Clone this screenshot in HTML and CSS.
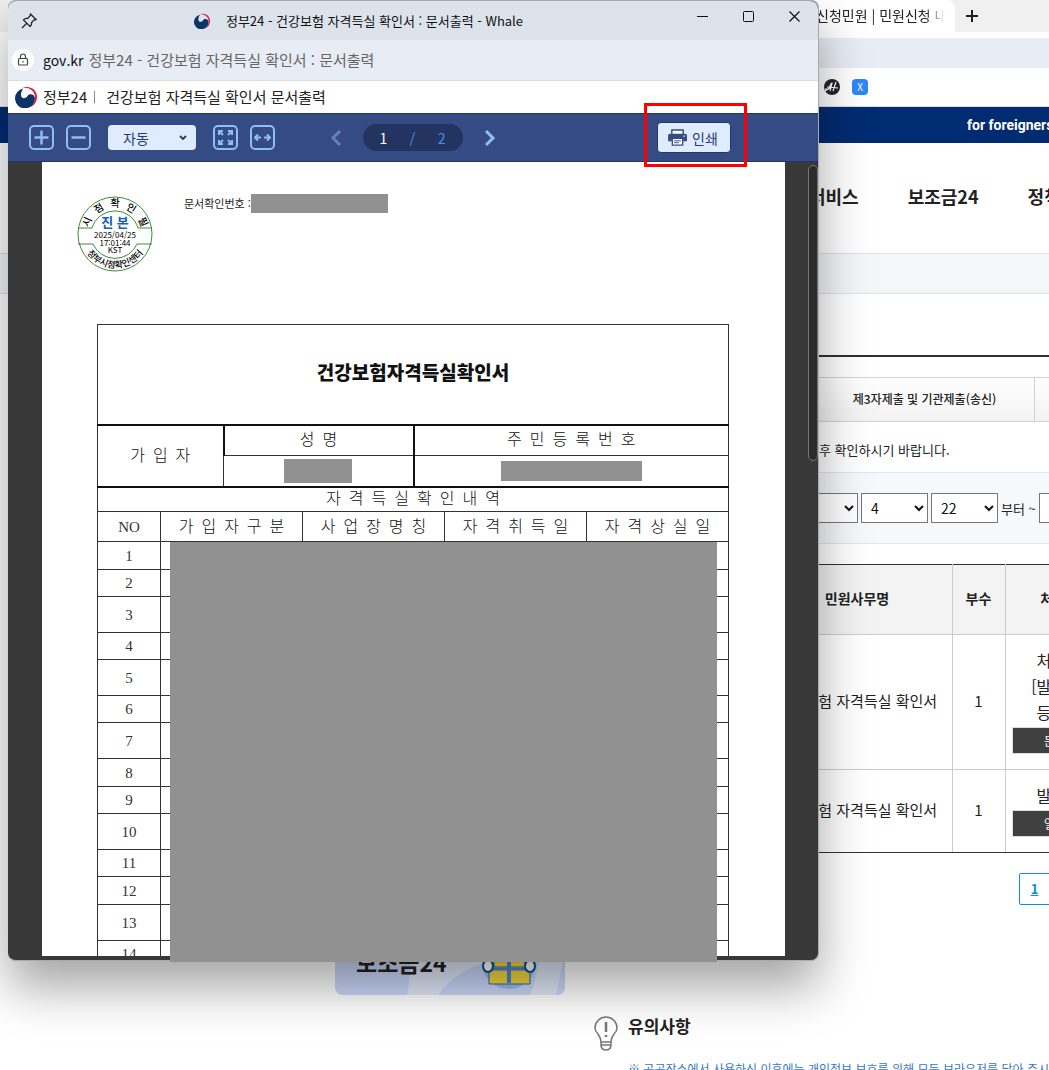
FILE: index.html
```html
<!DOCTYPE html>
<html lang="ko">
<head>
  <meta charset="UTF-8" />
  <meta name="viewport" content="width=device-width, initial-scale=1.0"/>
  <title>정부24 - 건강보험 자격득실 확인서 : 문서출력</title>
  <link rel="stylesheet" href="styles.css">
</head>
<body>
  <!-- main browser window -->
  <div class="browser">
    <div class="tab-strip">
      <div class="tab"><span>신청민원 | 민원신청 내역</span></div>
      <button class="new-tab" aria-label="새 탭">
        <svg width="14" height="14" viewBox="0 0 14 14"><path d="M7 1v12M1 7h12" stroke="#222" stroke-width="2"/></svg>
      </button>
    </div>
    <div class="address-row"></div>
    <div class="bookmarks">
      <svg width="16" height="16" viewBox="0 0 16 16"><circle cx="8" cy="8" r="8" fill="#25252f"/><path d="M1 10q4 1 5-3 1-3 2-3L6 12M12 3 9 12M3 8l11 1M1 12q3-2 5-3" fill="none" stroke="#fff" stroke-width="1.2"/></svg>
      <span class="bookmark-x">X</span>
    </div>

    <div class="gov-bar"><a href="#">for foreigners</a></div>
    <nav class="main-nav">
      <a href="#">서비스</a>
      <a href="#">보조금24</a>
      <a href="#">정책정보</a>
    </nav>
    <div class="breadcrumb"></div>

    <div class="content">
      <aside class="sidebar">
        <a class="side-card" href="#">
          <svg class="card-bg" viewBox="0 0 230 100" preserveAspectRatio="none"><path d="M0 0h60q22 60 12 100H0zM103 100q25-35 72-34h29q-3 20-9 34zM230 50v50h-9q6-25 9-50z" fill="#cbd9fa"/></svg>
          <span>보조금24</span>
          <svg class="gift" width="56" height="56" viewBox="0 0 56 56">
            <circle cx="28" cy="28" r="27" fill="#9dbcf0"/>
            <path d="M8 30h41v20H8z" fill="#f4d83e" stroke="#2c66b5"/>
            <path d="M13 18h31v15H13z" fill="#f4d83e" stroke="#2c66b5"/>
            <path d="M9 35h40" stroke="#4c87d8" stroke-width="3"/>
            <path d="M28 12v37" stroke="#4c87d8" stroke-width="4"/>
            <ellipse cx="7" cy="32" rx="5" ry="6" fill="#fff" stroke="#08539b" stroke-width="2"/>
            <ellipse cx="49" cy="32" rx="5" ry="6" fill="#fff" stroke="#08539b" stroke-width="2"/>
          </svg>
        </a>
      </aside>

      <main class="main">
        <div class="title-line"></div>
        <div class="page-tabs">
          <a href="#">온라인신청민원</a>
          <a href="#">제3자제출 및 기관제출(송신)</a>
          <a href="#">기관제출(수신)</a>
          <a href="#">방문신청민원</a>
        </div>
        <p class="guide">후 확인하시기 바랍니다.</p>
        <form class="filter">
          <select class="year" aria-label="시작 연도"><option>2025</option></select>
          <select aria-label="시작 월"><option>4</option></select>
          <select aria-label="시작 일"><option>22</option></select>
          <span>부터 ~</span>
          <select class="year" aria-label="종료 연도"><option>2025</option></select>
        </form>
        <table class="list">
          <colgroup><col class="c-date"><col class="c-name"><col class="c-count"><col class="c-state"><col></colgroup>
          <thead>
            <tr><th>신청일</th><th>민원사무명</th><th>부수</th><th>처리상태</th><th>비고</th></tr>
          </thead>
          <tbody>
            <tr class="tall">
              <td></td><td>건강보험 자격득실 확인서</td><td>1</td>
              <td class="state">처리완료<br>[발급완료]<br>등록문서<button>문서출력</button></td><td></td>
            </tr>
            <tr>
              <td></td><td>건강보험 자격득실 확인서</td><td>1</td>
              <td class="state">발급완료<button>열람문서</button></td><td></td>
            </tr>
          </tbody>
        </table>
        <div class="paging"><a href="#">1</a></div>
        <section class="notice">
          <svg width="24" height="35" viewBox="0 0 24 35" fill="none" stroke="#777" stroke-width="1.5">
            <path d="M7 26q0-4-3-8Q1 15 1 12a11 11 0 0 1 22 0q0 3-3 6-3 4-3 8zM7 26v4q1 4 5 4t5-4v-4M7 29h10"/>
            <path d="M12 6v10" stroke-width="2.5"/><path d="M12 19v2" stroke-width="2.5"/>
          </svg>
          <div>
            <h3>유의사항</h3>
            <p>※ 공공장소에서 사용하신 이후에는 개인정보 보호를 위해 모든 브라우저를 닫아 주시기 바랍니다.</p>
          </div>
        </section>
      </main>
    </div>
  </div>

  <!-- shared symbols -->
  <svg class="defs" width="0" height="0" aria-hidden="true">
    <symbol id="gov" viewBox="0 0 22 22">
      <path d="M7 2C13-1 22 2 22 11c0 5-3 9-7 10 4-3 5.800-7 5-11C19 4.500 14 1 7 2z" fill="#e4173e"/>
      <path d="M8.500 2.500A10 10 0 1 0 20 12.500C20 8 14 7 12.500 10c-1.500 3-6.500 3-6.500-1 0-3 1-5 2.500-6.500z" fill="#0a3566"/>
    </symbol>
  </svg>

  <!-- document popup -->
  <div class="popup">
    <div class="titlebar">
      <svg class="pin" width="16" height="16" viewBox="0 0 16 16" fill="none" stroke="#222" stroke-width="1.300"><path d="M9.500 1 15 6.500 13 7 10.500 9.500Q11 12 9 13.500L2.500 7Q4 5 6.500 5.500L9 3zM5.500 10.500 1 15"/></svg>
      <div class="window-title">
        <svg width="16" height="16"><use href="#gov"/></svg>
        <span>정부24 - 건강보험 자격득실 확인서 : 문서출력 - Whale</span>
      </div>
      <div class="window-buttons">
        <button aria-label="최소화"><svg width="11" height="11"><path d="M0 5.500h11" stroke="#111"/></svg></button>
        <button aria-label="최대화"><svg width="11" height="11"><rect x=".5" y=".5" width="10" height="10" rx="1" fill="none" stroke="#111"/></svg></button>
        <button aria-label="닫기"><svg width="11" height="11"><path d="m.5.5 10 10m0-10-10 10" stroke="#111" stroke-width="1.200"/></svg></button>
      </div>
    </div>
    <div class="urlbar">
      <span class="lock"><svg width="12" height="14" viewBox="0 0 12 14" fill="none" stroke="#444" stroke-width="1.200"><rect x="1.500" y="5.500" width="9" height="6.500" rx="1"/><path d="M3.500 5.500V3.500a2.500 2.500 0 0 1 5 0v2M6 8v1.500"/></svg></span>
      <span class="host">gov.kr</span>
      <span class="url-title">정부24 - 건강보험 자격득실 확인서 : 문서출력</span>
    </div>
    <div class="doc-title">
      <svg width="22" height="22"><use href="#gov"/></svg>
      <span>정부24</span>
      <i class="divider"></i>
      <span>건강보험 자격득실 확인서 문서출력</span>
    </div>
    <div class="toolbar">
      <div class="tools">
        <button class="tool" aria-label="확대"><svg width="17" height="17" viewBox="0 0 17 17"><path d="M8.500 1.500v14M1.500 8.500h14"/></svg></button>
        <button class="tool" aria-label="축소"><svg width="17" height="17" viewBox="0 0 17 17"><path d="M1.500 8.500h14"/></svg></button>
        <div class="zoom-box">
          <select class="zoom" aria-label="배율"><option>자동</option></select>
          <svg width="8" height="6" viewBox="0 0 8 6"><path d="m1 1 3 3 3-3" fill="none" stroke="#24396e" stroke-width="1.800"/></svg>
        </div>
        <button class="tool thin" aria-label="쪽 맞춤"><svg width="17" height="17" viewBox="0 0 17 17"><path d="m2 2 4 4m5 5 4 4M15 2l-4 4m-5 5-4 4M2 6V2h4m5 0h4v4m0 5v4h-4m-5 0H2v-4"/></svg></button>
        <button class="tool thin" aria-label="폭 맞춤"><svg width="17" height="17" viewBox="0 0 17 17"><path d="M1 8.500h6m3 0h6M4 5.500 1 8.500l3 3m9-6 3 3-3 3"/></svg></button>
      </div>
      <div class="pager">
        <button class="arrow dim" aria-label="이전"><svg width="12" height="18" viewBox="0 0 12 18"><path d="M10 2 3 9l7 7"/></svg></button>
        <div class="pages"><span class="current">1</span><span>/</span><span>2</span></div>
        <button class="arrow" aria-label="다음"><svg width="12" height="18" viewBox="0 0 12 18"><path d="m2 2 7 7-7 7"/></svg></button>
      </div>
      <button class="print">
        <svg width="19" height="17" viewBox="0 0 20 18"><path d="M4 6V1h12v5" fill="#fff" stroke="#344b84" stroke-width="1.500"/><path d="M2 5h16q2 0 2 2v6h-4v-3H4v3H0V7q0-2 2-2z" fill="#344b84"/><path d="M4.500 10h11v7h-11z" fill="#fff" stroke="#344b84" stroke-width="1.400"/><path d="M6.500 12.500h7m-7 2h5" stroke="#344b84"/><path d="M16 7.500h2" stroke="#fff"/></svg>
        인쇄
      </button>
    </div>

    <div class="viewer">
      <div class="paper">
        <div class="paper-head">
          <svg class="stamp" width="76" height="76" viewBox="0 0 76 76">
            <defs>
              <path id="arcTop" d="M11 38a27 27 0 0 1 54 0"/>
              <path id="arcBottom" d="M4 38a34 34 0 0 0 68 0"/>
            </defs>
            <g fill="none" stroke="#3f8a3f">
              <circle cx="38" cy="38" r="37"/>
              <path d="M1 32h14a24 24 0 0 1 46 0h14M1 48h15a24 24 0 0 0 44 0h15"/>
            </g>
            <g class="ring" text-anchor="middle">
              <text><textPath href="#arcTop" startOffset="13%">시</textPath></text>
              <text><textPath href="#arcTop" startOffset="32%">점</textPath></text>
              <text><textPath href="#arcTop" startOffset="50%">확</textPath></text>
              <text><textPath href="#arcTop" startOffset="68%">인</textPath></text>
              <text><textPath href="#arcTop" startOffset="87%">필</textPath></text>
              <text><textPath href="#arcBottom" startOffset="50%">정부시점확인센터</textPath></text>
            </g>
            <text class="origin" x="38" y="31">진 본</text>
            <text class="stamp-time" x="38" y="42">2025/04/25</text>
            <text class="stamp-time" x="38" y="50">17:01:44</text>
            <text class="stamp-time" x="38" y="57">KST</text>
          </svg>
          <div class="doc-no">문서확인번호 : <span class="mask mask-no"></span></div>
        </div>

        <table class="cert">
          <colgroup><col class="w63"><col class="w63"><col class="w79"><col class="w111"><col class="w31"><col class="w142"><col class="w142"></colgroup>
          <tr class="cert-title"><th colspan="7">건강보험자격득실확인서</th></tr>
          <tr class="r31"><td colspan="2" rowspan="2">가&nbsp; 입&nbsp; 자</td><td colspan="2">성&nbsp; 명</td><td colspan="3">주&nbsp; 민&nbsp; 등&nbsp; 록&nbsp; 번&nbsp; 호</td></tr>
          <tr class="r31 thick"><td colspan="2"><span class="mask mask-name"></span></td><td colspan="3"><span class="mask mask-id"></span></td></tr>
          <tr class="r25"><td colspan="7">자&nbsp; 격&nbsp; 득&nbsp; 실&nbsp; 확&nbsp; 인&nbsp; 내&nbsp; 역</td></tr>
          <tr class="r30"><td class="num">NO</td><td colspan="2">가&nbsp; 입&nbsp; 자&nbsp; 구&nbsp; 분</td><td colspan="2">사&nbsp; 업&nbsp; 장&nbsp; 명&nbsp; 칭</td><td>자&nbsp; 격&nbsp; 취&nbsp; 득&nbsp; 일</td><td>자&nbsp; 격&nbsp; 상&nbsp; 실&nbsp; 일</td></tr>
          <tr class="r28"><td class="num">1</td><td colspan="6"></td></tr>
          <tr><td class="num">2</td><td colspan="6"></td></tr>
          <tr class="r36"><td class="num">3</td><td colspan="6"></td></tr>
          <tr><td class="num">4</td><td colspan="6"></td></tr>
          <tr class="r36"><td class="num">5</td><td colspan="6"></td></tr>
          <tr><td class="num">6</td><td colspan="6"></td></tr>
          <tr class="r36"><td class="num">7</td><td colspan="6"></td></tr>
          <tr class="r28"><td class="num">8</td><td colspan="6"></td></tr>
          <tr><td class="num">9</td><td colspan="6"></td></tr>
          <tr class="r36"><td class="num">10</td><td colspan="6"></td></tr>
          <tr><td class="num">11</td><td colspan="6"></td></tr>
          <tr class="r28"><td class="num">12</td><td colspan="6"></td></tr>
          <tr class="r36"><td class="num">13</td><td colspan="6"></td></tr>
          <tr><td class="num">14</td><td colspan="6"></td></tr>
        </table>
      </div>
      <div class="scroll-thumb"></div>
    </div>
    <!-- hides the personal data rows -->
    <div class="mask-rows"></div>
    <div class="highlight"></div>
  </div>
</body>
</html>
```
FILE: styles.css
```css
* {
  box-sizing: border-box;
}

body {
  margin: 0;
  height: 100vh;
  position: relative;
  overflow: hidden;
  background: #fff;
  color: #222;
  font-family: "Noto Sans CJK KR", sans-serif;
}

button {
  font-family: inherit;
  border: none;
  padding: 0;
  cursor: pointer;
}

a {
  color: inherit;
  text-decoration: none;
}

h3, p {
  margin: 0;
}

.defs {
  position: absolute;
}

/* main browser */
.browser {
  height: 100%;
  overflow: hidden;
}

.tab-strip {
  display: flex;
  height: 32px;
  background: #f0f0f0;
}

.tab {
  width: 195px;
  margin-left: 760px;
  padding: 0 10px 0 56px;
  border-radius: 0 8px 0 0;
  background: #fff;
  font-size: 14px;
  line-height: 31px;
  white-space: nowrap;
}

.tab span {
  display: block;
  overflow: hidden;
  -webkit-mask-image: linear-gradient(to right, #000 110px, transparent);
}

.new-tab {
  width: 34px;
  background: none;
}

.new-tab svg {
  display: block;
  margin: 0 auto;
}

.address-row {
  height: 30px;
  margin: 6px 0 0 100px;
  background: #e8ecf4;
}

.bookmarks {
  display: flex;
  align-items: center;
  gap: 12px;
  height: 39px;
  padding-left: 824px;
  border-bottom: 1px solid #ddd;
}

.bookmark-x {
  width: 16px;
  height: 16px;
  border-radius: 4px;
  background: #2f86fb;
  color: #fff;
  font-size: 10px;
  line-height: 16px;
  text-align: center;
}

.gov-bar {
  height: 36px;
  padding-left: 967px;
  background: #022c72;
  color: #fff;
  font-family: Roboto, sans-serif;
  font-size: 14px;
  font-weight: bold;
  line-height: 36px;
  white-space: nowrap;
}

.main-nav {
  display: flex;
  align-items: center;
  gap: 49px;
  height: 110px;
  padding: 0 0 4px 809px;
  font-size: 18px;
  font-weight: bold;
  white-space: nowrap;
}

.breadcrumb {
  height: 41px;
  background: #f4f6fa;
  border-top: 1px solid #dfe2e6;
  border-bottom: 1px solid #dfe2e6;
}

.content {
  display: flex;
  align-items: flex-start;
  gap: 29px;
  padding-left: 335px;
}

.sidebar {
  width: 230px;
  flex: none;
  padding-top: 600px;
}

.side-card {
  display: flex;
  position: relative;
  align-items: center;
  justify-content: space-between;
  height: 101px;
  padding: 35px 28px 0 21px;
  border-radius: 8px;
  background: #e3eafa;
  overflow: hidden;
  font-size: 23px;
  font-weight: bold;
}

.side-card span, .gift {
  position: relative;
}

.card-bg {
  position: absolute;
  left: 0;
  top: 0;
  width: 100%;
  height: 100%;
}

.main {
  width: 881px;
  flex: none;
  padding-top: 61px;
}

.title-line {
  height: 2px;
  background: #2d312f;
}

.page-tabs {
  display: flex;
  height: 45px;
  margin-top: 20px;
  border: 1px solid #d3d3d3;
  border-right: none;
  background: linear-gradient(#fff, #f2f2f2);
  font-size: 12px;
  font-weight: 500;
  line-height: 42px;
  text-align: center;
}

.page-tabs a {
  flex: 1;
  border-right: 1px solid #d3d3d3;
}

.guide {
  padding: 18px 0 12px 225px;
  font-size: 13px;
  line-height: 20px;
}

.filter {
  display: flex;
  align-items: center;
  gap: 3px;
  height: 72px;
  padding-left: 174px;
  border: solid #e3e5ec;
  border-width: 1px 0;
  background: #f7f8fb;
  font-size: 13px;
}

.filter select {
  width: 67px;
  height: 30px;
  padding-left: 5px;
  border: 1px solid #777;
  background: #fff;
  color: #111;
  font-family: inherit;
  font-size: 14px;
}

.filter .year {
  width: 90px;
}

.list {
  width: 100%;
  margin-top: 20px;
  table-layout: fixed;
  border-collapse: collapse;
  border-top: 1px solid #333;
  border-bottom: 1px solid #333;
  font-size: 15px;
  text-align: center;
}

.c-date { width: 168px; }
.c-name { width: 190px; }
.c-count { width: 53px; }
.c-state { width: 122px; }

.list th {
  height: 70px;
  background: #f3f3f3;
  font-size: 14px;
}

.list th, .list td {
  padding: 0 0 3px;
  border: 1px solid #ccc;
  border-left: none;
}

.list thead th {
  border-top-color: #333;
}

.list tbody tr:last-child td {
  border-bottom-color: #333;
}

.list td {
  height: 83px;
}

.list .tall td {
  height: 135px;
}

.list .state {
  font-size: 16px;
  line-height: 26px;
}

.state button {
  display: block;
  width: 108px;
  height: 27px;
  margin: 2px auto 0;
  border: 1px solid #ddd;
  background: #404040;
  color: #fff;
  font-size: 12px;
}

.paging {
  display: flex;
  justify-content: center;
  margin-top: 20px;
}

.paging a {
  width: 32px;
  height: 32px;
  border: 1px solid #0a8de4;
  border-radius: 2px;
  color: #0a8de4;
  font-size: 13px;
  font-weight: bold;
  line-height: 30px;
  text-align: center;
  text-decoration: underline;
}

.notice {
  display: flex;
  align-items: flex-start;
  gap: 10px;
  margin-top: 111px;
}

.notice h3 {
  font-size: 17px;
  line-height: 20px;
}

.notice p {
  margin-top: 23px;
  color: #3478c8;
  font-size: 12px;
  line-height: 20px;
  white-space: nowrap;
}

/* popup window */
.popup {
  position: absolute;
  left: 8px;
  top: 0;
  width: 811px;
  height: 961px;
  display: flex;
  flex-direction: column;
  border: 1px solid #aaa;
  border-left: none;
  border-radius: 8px;
  background: #383838;
  box-shadow: 0 26px 50px rgba(0, 0, 0, 0.36);
}

.titlebar {
  display: flex;
  align-items: center;
  justify-content: space-between;
  height: 39px;
  padding-left: 13px;
  border-radius: 8px 8px 0 0;
  background: #dce3ea;
}

.window-title {
  display: flex;
  align-items: center;
  gap: 16px;
  color: #111;
  font-size: 13px;
}

.window-buttons {
  display: flex;
  align-self: flex-start;
}

.window-buttons button {
  width: 46px;
  height: 30px;
  background: none;
}

.urlbar {
  display: flex;
  align-items: center;
  height: 41px;
  padding-left: 4px;
  border-bottom: 1px solid #ddd;
  background: #e8ecf4;
  color: #666;
  font-size: 15px;
  line-height: 18px;
}

.lock {
  display: flex;
  align-items: center;
  justify-content: center;
  width: 22px;
  height: 22px;
  border-radius: 50%;
  background: #fff;
}

.host {
  margin: 0 5px 0 9px;
  color: #111;
  font-size: 14px;
}

.doc-title {
  display: flex;
  align-items: center;
  height: 32px;
  padding-left: 7px;
  gap: 6px;
  background: #fff;
  font-size: 15px;
  line-height: 18px;
}

.divider {
  width: 1px;
  height: 12px;
  margin: 0 5px 0 1px;
  background: #888;
}

.toolbar {
  display: flex;
  align-items: center;
  justify-content: space-between;
  height: 49px;
  padding: 0 87px 0 21px;
  border: solid #1f356c;
  border-width: 1px 0;
  background: #344b84;
}

.tools {
  display: flex;
  gap: 12px;
}

.tool {
  width: 25px;
  height: 25px;
  display: flex;
  align-items: center;
  justify-content: center;
  border: 2px solid #8dbcf8;
  border-radius: 5px;
  background: none;
  stroke: #8dbcf8;
  stroke-width: 2.5;
  fill: none;
}

.thin {
  stroke-width: 2;
}

.zoom-box {
  position: relative;
  margin: 0 5px;
}

.zoom {
  width: 88px;
  height: 25px;
  padding: 0 15px;
  appearance: none;
  border: none;
  border-radius: 4px;
  background: #dfecff;
  color: #24396e;
  font-family: inherit;
  font-size: 14px;
}

.zoom-box svg {
  position: absolute;
  right: 9px;
  top: 10px;
}

.pager {
  display: flex;
  align-items: center;
  gap: 21px;
  margin-right: 107px;
}

.arrow {
  background: none;
  display: flex;
  fill: none;
  stroke: #8dbcf8;
  stroke-width: 3;
}

.dim {
  opacity: 0.5;
}

.pages {
  display: flex;
  align-items: center;
  justify-content: space-between;
  width: 100px;
  height: 27px;
  padding: 0 17px;
  border-radius: 14px;
  background: #22345f;
  color: #4391e6;
  font-size: 14px;
}

.current {
  color: #fff;
}

.print {
  display: flex;
  align-items: center;
  justify-content: center;
  gap: 5px;
  width: 74px;
  height: 31px;
  padding-right: 2px;
  border: 1px solid #22386f;
  border-radius: 4px;
  background: #dfecff;
  color: #24396e;
  font-size: 14px;
}

.viewer {
  display: flex;
  justify-content: space-between;
  height: 794px;
  padding-left: 34px;
  overflow: hidden;
}

.paper {
  width: 743px;
  height: 100%;
  padding: 34px 56px 0 55px;
  background: #fff;
  overflow: hidden;
}

.paper-head {
  display: flex;
  align-items: flex-start;
  gap: 31px;
  height: 128px;
  margin-left: -20px;
}

.ring {
  font-size: 10px;
  font-weight: 500;
}

.ring text:last-child {
  font-size: 9px;
}

.origin {
  fill: #1560b8;
  font-size: 13px;
  font-weight: bold;
  text-anchor: middle;
}

.stamp-time {
  font-family: "Noto Sans CJK KR", sans-serif;
  font-size: 8px;
  text-anchor: middle;
}

.doc-no {
  display: flex;
  align-items: center;
  height: 14px;
  font-size: 11px;
}

.mask {
  display: inline-block;
  vertical-align: middle;
  background: #919191;
}

.mask-no { width: 137px; height: 19px; }
.mask-name { width: 68px; height: 24px; }
.mask-id { width: 141px; height: 20px; }

.cert {
  width: 632px;
  table-layout: fixed;
  border-collapse: collapse;
  border: 1px solid #111;
  color: #111;
  font-family: "Liberation Serif", "Noto Sans CJK KR", serif;
  font-size: 16px;
  font-weight: 300;
  line-height: 18px;
  text-align: center;
}

.w31 { width: 31px; }
.w63 { width: 63px; }
.w79 { width: 79px; }
.w111 { width: 111px; }
.w142 { width: 142px; }

.cert th, .cert td {
  padding: 0;
  border: 1px solid #333;
}

.cert .num {
  color: #333;
  font-size: 15px;
}

.cert tr { height: 27px; }
.cert .r25 { height: 25px; }
.cert .r28 { height: 28px; }
.cert .r30 { height: 30px; }
.cert .r31 { height: 31px; }
.cert .r36 { height: 36px; }

.cert .r31 td + td {
  border-left: 2px solid #111;
}

.cert .thick td, .cert .r31 td[rowspan] {
  border-bottom: 2px solid #111;
}

.cert .cert-title {
  height: 100px;
}

.cert .cert-title th {
  border-bottom: 2px solid #111;
  font-size: 19px;
  font-weight: 900;
}

.scroll-thumb {
  width: 10px;
  height: 296px;
  margin-top: 3px;
  border: 1px solid #777;
  border-radius: 5px;
  background: #2b2b2b;
}

.mask-rows {
  position: absolute;
  left: 162px;
  top: 541px;
  width: 547px;
  height: 420px;
  background: #919191;
}

.highlight {
  position: absolute;
  left: 636px;
  top: 102px;
  width: 103px;
  height: 64px;
  border: 3px solid #f00;
}
```
